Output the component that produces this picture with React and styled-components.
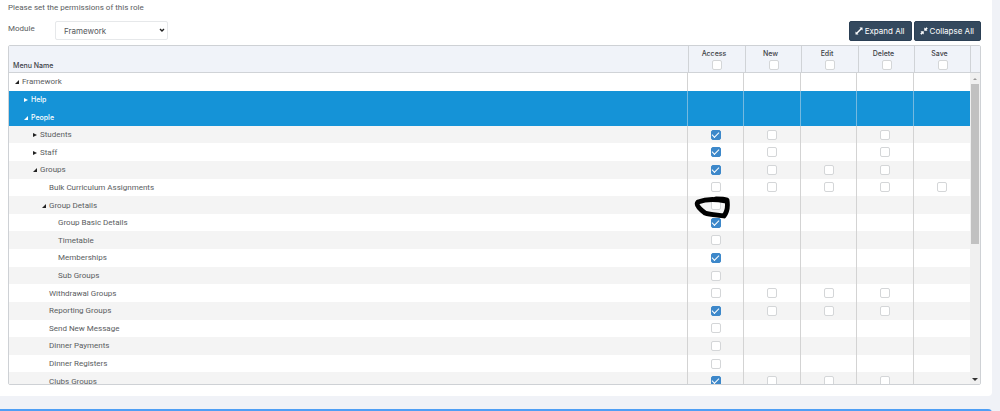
import React from 'react';
import styled, { createGlobalStyle, css } from 'styled-components';

const GlobalStyle = createGlobalStyle`
  * {
    box-sizing: border-box;
  }

  body {
    margin: 0;
    background-color: #f0f2f7;
    color: #5a5d61;
    font-family: Roboto, 'Liberation Sans', sans-serif;
    font-size: 8px;
    line-height: 10px;
    overflow: hidden;
  }
`;

const Page = styled.main`
  padding-right: 8px;
`;

const Card = styled.section`
  padding: 3px 11px 11px 8px;
  background-color: white;
  border-radius: 0 0 4px 0;
`;

const NextCard = styled.section`
  height: 20px;
  margin-top: 13px;
  background-color: white;
  border-top: 2px solid #4f9ff5;
  border-radius: 0 4px 0 0;
`;

const Description = styled.p`
  margin: 0 0 8px;
`;

const Toolbar = styled.div`
  display: flex;
  align-items: flex-start;
  margin-bottom: 4px;
`;

const Label = styled.label`
  width: 47px;
  padding-top: 3px;
`;

const SelectBox = styled.div`
  display: grid;
  width: 113px;
  align-items: center;

  > * {
    grid-area: 1 / 1;
  }

  svg {
    justify-self: end;
    margin-right: 3px;
    pointer-events: none;
  }
`;

const Select = styled.select`
  appearance: none;
  height: 19px;
  padding: 0 8px;
  border: 1px solid #e6e8ea;
  border-radius: 2px;
  background-color: white;
  color: #55585c;
  font: inherit;
  font-family: Inter, sans-serif;
`;

const Buttons = styled.div`
  display: flex;
  gap: 2px;
  margin-left: auto;
`;

const Button = styled.button`
  display: flex;
  align-items: center;
  gap: 2px;
  height: 20px;
  padding: 0 6px 0 5px;
  border: 1px solid #2b3f54;
  border-radius: 2px;
  background-color: #34495e;
  color: white;
  font: inherit;
  font-family: Inter, sans-serif;
  cursor: pointer;
`;

const Grid = styled.div`
  border: 1px solid #ced1d5;
  border-radius: 2px;
  overflow: hidden;
`;

const GridHeader = styled.div`
  padding-right: 9px;
  background-color: #f0f3f9;
  border-bottom: 1px solid #d0d3d7;
`;

const GridBody = styled.div`
  display: flex;
  align-items: stretch;
  height: 311px;
`;

const Scrollable = styled.div`
  flex: 1;
  overflow: hidden;
`;

const Table = styled.table`
  width: 100%;
  table-layout: fixed;
  border-collapse: separate;
  border-spacing: 0;
`;

const BodyTable = styled(Table)`
  height: 317px;
`;

const HeaderCell = styled.th`
  height: 26px;
  padding: 3px 0 1px;
  border-left: 1px solid #d0d3d7;
  color: #3c4146;
  font-family: Inter, sans-serif;
  font-size: 7px;
  font-weight: 500;
  text-align: center;
  vertical-align: top;

  &:first-child {
    padding-left: 4px;
    border-left: 0;
    text-align: left;
    vertical-align: bottom;
  }

  &:last-child {
    border-right: 1px solid #d0d3d7;
  }
`;

const HeaderText = styled.span`
  display: block;
  padding-right: 6px;
  margin-bottom: 1px;
`;

const Row = styled.tr`
  background-color: white;

  &:nth-child(even) {
    background-color: #f4f4f4;
  }

  ${({ $selected }) =>
    $selected &&
    css`
      && {
        background-color: #1593d7;
        color: white;
        font-family: Inter, sans-serif;
        font-size: 7px;
        font-weight: 500;
      }
    `}
`;

const NameCell = styled.td`
  padding: 1px 0 0 ${({ $level }) => 5 + $level * 9}px;
`;

const Name = styled.div`
  display: flex;
  align-items: center;
  gap: 2px;
`;

const Toggle = styled.button`
  display: flex;
  width: 6px;
  padding: 0;
  border: 0;
  background: none;
  color: ${({ $selected }) => ($selected ? 'white' : '#222')};
`;

const ToggleSpace = styled.span`
  width: 6px;
`;

const Cell = styled.td`
  position: relative;
  padding: 0;
  border-left: 1px solid ${({ $selected }) => ($selected ? '#75b9df' : '#d3d3d3')};
`;

const Checkbox = styled.input`
  appearance: none;
  display: grid;
  place-items: center;
  width: 10px;
  height: 10px;
  margin: 0 auto;
  border: 1px solid #d4d6d8;
  border-radius: 2px;
  background-color: white;

  &:checked {
    border-color: #3d88ca;
    background-color: #3d88ca;
  }

  &:checked::before {
    content: '';
    width: 6px;
    height: 3px;
    margin-bottom: 2px;
    border-left: 1px solid white;
    border-bottom: 1px solid white;
    transform: rotate(-45deg);
  }
`;

const Scribble = styled.svg`
  position: absolute;
  z-index: 1;
  top: 50%;
  left: 50%;
  transform: translate(-50%, -50%);
  pointer-events: none;
`;

const Scrollbar = styled.div`
  display: flex;
  flex-direction: column;
  width: 10px;
  background-color: #f0f0f0;
`;

const ScrollButton = styled.button`
  display: flex;
  align-items: center;
  justify-content: center;
  height: 11px;
  padding: 0;
  border: 0;
  background: none;
  color: ${({ $muted }) => ($muted ? '#999' : '#333')};
`;

const Thumb = styled.div`
  height: 160px;
  margin: 0 1px auto;
  background-color: #c1c1c1;
`;

const columns = [
  { title: 'Access', head: 57, body: 56 },
  { title: 'New', head: 56, body: 57 },
  { title: 'Edit', head: 57, body: 56 },
  { title: 'Delete', head: 56, body: 57 },
  { title: 'Save', head: 57, body: 57 },
];

// one character per column: x = ticked, o = unticked, - = no permission
const rows = [
  { name: 'Framework', level: 0, toggle: 'open', access: '-----' },
  { name: 'Help', level: 1, toggle: 'closed', access: '-----', selected: true },
  { name: 'People', level: 1, toggle: 'open', access: '-----', selected: true },
  { name: 'Students', level: 2, toggle: 'closed', access: 'xo-o-' },
  { name: 'Staff', level: 2, toggle: 'closed', access: 'xo-o-' },
  { name: 'Groups', level: 2, toggle: 'open', access: 'xooo-' },
  { name: 'Bulk Curriculum Assignments', level: 3, access: 'ooooo' },
  { name: 'Group Details', level: 3, toggle: 'open', access: 'o----', marked: true },
  { name: 'Group Basic Details', level: 4, access: 'x----' },
  { name: 'Timetable', level: 4, access: 'o----' },
  { name: 'Memberships', level: 4, access: 'x----' },
  { name: 'Sub Groups', level: 4, access: 'o----' },
  { name: 'Withdrawal Groups', level: 3, access: 'oooo-' },
  { name: 'Reporting Groups', level: 3, access: 'xooo-' },
  { name: 'Send New Message', level: 3, access: 'o----' },
  { name: 'Dinner Payments', level: 3, access: 'o----' },
  { name: 'Dinner Registers', level: 3, access: 'o----' },
  { name: 'Clubs Groups', level: 3, access: 'xooo-' },
];

const ExpandIcon = () => (
  <svg width="8" height="8" viewBox="0 0 16 16" fill="currentColor" aria-hidden="true">
    <path d="M9 1h6v6l-2-2-8 8 2 2H1V9l2 2 8-8z" />
  </svg>
);

const CollapseIcon = () => (
  <svg width="8" height="8" viewBox="0 0 16 16" fill="currentColor" aria-hidden="true">
    <path d="M8.500 1v6.500H15l-2-2 2.500-2.500L13 .5 10.500 3zM7.500 15V8.500H1l2 2L.5 13 3 15.500 5.500 13z" />
  </svg>
);

const ToggleIcon = ({ open }) => (
  <svg width="6" height="6" viewBox="0 0 6 6" fill="currentColor" aria-hidden="true">
    <path d={open ? 'M5 1v4H1z' : 'M1 1l4 2-4 2z'} />
  </svg>
);

const PermissionRow = ({ row }) => (
  <Row $selected={row.selected}>
    <NameCell $level={row.level}>
      <Name>
        {row.toggle ? (
          <Toggle $selected={row.selected} aria-label={`Toggle ${row.name}`}>
            <ToggleIcon open={row.toggle === 'open'} />
          </Toggle>
        ) : (
          <ToggleSpace />
        )}
        {row.name}
      </Name>
    </NameCell>
    {columns.map((column, index) => (
      <Cell key={column.title} $selected={row.selected}>
        {row.access[index] !== '-' && (
          <Checkbox
            type="checkbox"
            defaultChecked={row.access[index] === 'x'}
            aria-label={`${column.title} ${row.name}`}
          />
        )}
        {row.marked && index === 0 && (
          <Scribble width="46" height="28" viewBox="0 0 46 28" fill="none">
            <path
              d="M32 10C23 8 13 8 5 11C2 14 8 19 12 22C17 24 25 24 31 25C34 21 35 15 34 9C31 8 27 8 23 8"
              stroke="black"
              strokeWidth="4.800"
              strokeLinecap="round"
              strokeLinejoin="round"
            />
          </Scribble>
        )}
      </Cell>
    ))}
  </Row>
);

const App = () => {
  return (
    <>
      <GlobalStyle />
      <Page>
        <Card>
          <Description>Please set the permissions of this role</Description>
          <Toolbar>
            <Label htmlFor="module">Module</Label>
            <SelectBox>
              <Select id="module">
                <option>Framework</option>
              </Select>
              <svg width="6" height="5" viewBox="0 0 6 5" fill="none" aria-hidden="true">
                <path d="M1 1l2 2 2-2" stroke="#222" strokeWidth="1.400" />
              </svg>
            </SelectBox>
            <Buttons>
              <Button>
                <ExpandIcon />
                Expand All
              </Button>
              <Button>
                <CollapseIcon />
                Collapse All
              </Button>
            </Buttons>
          </Toolbar>
          <Grid>
            <GridHeader>
              <Table>
                <colgroup>
                  <col />
                  {columns.map((column) => (
                    <col key={column.title} width={column.head} />
                  ))}
                </colgroup>
                <thead>
                  <tr>
                    <HeaderCell>Menu Name</HeaderCell>
                    {columns.map((column) => (
                      <HeaderCell key={column.title}>
                        <HeaderText>{column.title}</HeaderText>
                        <Checkbox type="checkbox" aria-label={`${column.title} for all`} />
                      </HeaderCell>
                    ))}
                  </tr>
                </thead>
              </Table>
            </GridHeader>
            <GridBody>
              <Scrollable>
                <BodyTable>
                  <colgroup>
                    <col />
                    {columns.map((column) => (
                      <col key={column.title} width={column.body} />
                    ))}
                  </colgroup>
                  <tbody>
                    {rows.map((row) => (
                      <PermissionRow key={row.name} row={row} />
                    ))}
                  </tbody>
                </BodyTable>
              </Scrollable>
              <Scrollbar>
                <ScrollButton $muted aria-label="Scroll up">
                  <svg width="6" height="4" viewBox="0 0 6 4" fill="currentColor">
                    <path d="M1 3l2-2 2 2z" />
                  </svg>
                </ScrollButton>
                <Thumb />
                <ScrollButton aria-label="Scroll down">
                  <svg width="6" height="4" viewBox="0 0 6 4" fill="currentColor">
                    <path d="M0 1h6L3 4z" />
                  </svg>
                </ScrollButton>
              </Scrollbar>
            </GridBody>
          </Grid>
        </Card>
        <NextCard />
      </Page>
    </>
  );
};

export default App;
